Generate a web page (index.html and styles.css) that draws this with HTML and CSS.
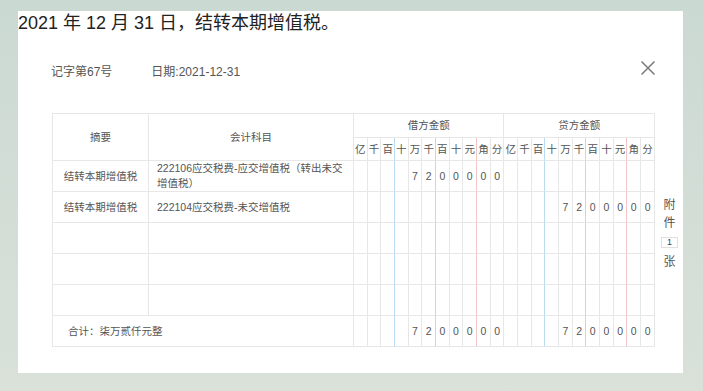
FILE: index.html
```html
<!DOCTYPE html>
<html lang="zh-CN">
<head>
<meta charset="utf-8">
<title>记账凭证</title>
<link rel="stylesheet" href="styles.css">
</head>
<body>
<div class="sheet">
  <div class="title">2021 年 12 月 31 日，结转本期增值税。</div>
  <div class="dialog">
    <div class="head">
      <div class="meta"><span class="no">记字第67号</span><span class="date">日期:2021-12-31</span></div>
      <span class="close"><svg width="16" height="16" viewBox="0 0 16 16"><path d="M1.5 1.5 L14.5 14.5 M14.5 1.5 L1.5 14.5" stroke="#7a7a7a" stroke-width="1.5" fill="none"/></svg></span>
    </div>
    <div class="body">
      <table class="voucher">
        <colgroup><col class="c-sum"><col class="c-acc"></colgroup>
        <thead>
          <tr class="h1">
            <th rowspan="2">摘要</th>
            <th rowspan="2">会计科目</th>
            <th colspan="11">借方金额</th>
            <th colspan="11">贷方金额</th>
          </tr>
          <tr class="h2">
            <th>亿</th><th>千</th><th class="bl">百</th><th>十</th><th>万</th><th class="bl">千</th><th>百</th><th>十</th><th class="rd">元</th><th>角</th><th>分</th>
            <th>亿</th><th>千</th><th class="bl">百</th><th>十</th><th>万</th><th class="bl">千</th><th>百</th><th>十</th><th class="rd">元</th><th>角</th><th>分</th>
          </tr>
        </thead>
        <tbody>
          <tr>
            <td class="sum">结转本期增值税</td>
            <td class="acc">222106应交税费-应交增值税（转出未交增值税）</td>
            <td></td><td></td><td class="bl"></td><td></td><td>7</td><td class="bl">2</td><td>0</td><td>0</td><td class="rd">0</td><td>0</td><td>0</td>
            <td></td><td></td><td class="bl"></td><td></td><td></td><td class="bl"></td><td></td><td></td><td class="rd"></td><td></td><td></td>
          </tr>
          <tr>
            <td class="sum">结转本期增值税</td>
            <td class="acc">222104应交税费-未交增值税</td>
            <td></td><td></td><td class="bl"></td><td></td><td></td><td class="bl"></td><td></td><td></td><td class="rd"></td><td></td><td></td>
            <td></td><td></td><td class="bl"></td><td></td><td>7</td><td class="bl">2</td><td>0</td><td>0</td><td class="rd">0</td><td>0</td><td>0</td>
          </tr>
          <tr>
            <td class="sum"></td><td class="acc"></td>
            <td></td><td></td><td class="bl"></td><td></td><td></td><td class="bl"></td><td></td><td></td><td class="rd"></td><td></td><td></td>
            <td></td><td></td><td class="bl"></td><td></td><td></td><td class="bl"></td><td></td><td></td><td class="rd"></td><td></td><td></td>
          </tr>
          <tr>
            <td class="sum"></td><td class="acc"></td>
            <td></td><td></td><td class="bl"></td><td></td><td></td><td class="bl"></td><td></td><td></td><td class="rd"></td><td></td><td></td>
            <td></td><td></td><td class="bl"></td><td></td><td></td><td class="bl"></td><td></td><td></td><td class="rd"></td><td></td><td></td>
          </tr>
          <tr>
            <td class="sum"></td><td class="acc"></td>
            <td></td><td></td><td class="bl"></td><td></td><td></td><td class="bl"></td><td></td><td></td><td class="rd"></td><td></td><td></td>
            <td></td><td></td><td class="bl"></td><td></td><td></td><td class="bl"></td><td></td><td></td><td class="rd"></td><td></td><td></td>
          </tr>
          <tr class="total">
            <td class="total-label" colspan="2">合计：柒万贰仟元整</td>
            <td></td><td></td><td class="bl"></td><td></td><td>7</td><td class="bl">2</td><td>0</td><td>0</td><td class="rd">0</td><td>0</td><td>0</td>
            <td></td><td></td><td class="bl"></td><td></td><td>7</td><td class="bl">2</td><td>0</td><td>0</td><td class="rd">0</td><td>0</td><td>0</td>
          </tr>
        </tbody>
      </table>
      <div class="attach">
        <span class="ch">附</span>
        <span class="ch">件</span>
        <span class="count">1</span>
        <span class="ch zhang">张</span>
      </div>
    </div>
  </div>
</div>
</body>
</html>
```

FILE: styles.css
```css
html, body {
  margin: 0;
  padding: 0;
}

body {
  width: 703px;
  height: 391px;
  background: linear-gradient(#cbd9d3, #d9e1d9);
  font-family: "Liberation Sans", "Noto Sans CJK SC", sans-serif;
  overflow: hidden;
}

.sheet {
  margin: 11px 0 0 18px;
  width: 665px;
  height: 362px;
  background: #fff;
  overflow: hidden;
}

.title {
  font-size: 18px;
  line-height: 24px;
  height: 24px;
  color: #222;
  white-space: nowrap;
}

.dialog {
  padding-left: 33px;
  width: 605px;
}

.head {
  margin-top: 20px;
  height: 30px;
  display: flex;
  align-items: center;
  justify-content: space-between;
}

.meta {
  font-size: 12px;
  color: #555;
  display: flex;
}

.date {
  margin-left: 39px;
}

.close {
  display: flex;
  width: 16px;
  height: 16px;
  margin-top: -4px;
}

.body {
  margin-top: 28px;
  display: flex;
  align-items: flex-start;
  width: 630px;
}

.voucher {
  flex: none;
  margin-left: 1px;
  width: 603px;
  table-layout: fixed;
  border-collapse: separate;
  border-spacing: 0;
  border-top: 1px solid #e7e7e7;
  border-left: 1px solid #e7e7e7;
  font-size: 10.5px;
  color: #555;
}

.c-sum { width: 96px; }
.c-acc { width: 205px; }

.voucher th,
.voucher td {
  border-right: 1px solid #e7e7e7;
  border-bottom: 1px solid #e7e7e7;
  padding: 0;
  font-weight: normal;
  text-align: center;
  vertical-align: middle;
  line-height: 15px;
}

.voucher .bl { border-right-color: #b9dcf3; }
.voucher .rd { border-right-color: #f5c4c4; }

.h1 th { height: 23px; }
.h2 th { height: 22px; }

.voucher tbody td { height: 30px; }

.voucher td.acc {
  text-align: left;
  padding: 0 8px;
}

.voucher td.total-label {
  text-align: left;
  padding-left: 15px;
}

.attach {
  flex: none;
  margin-left: 6px;
  margin-top: 83px;
  width: 17px;
  display: flex;
  flex-direction: column;
  align-items: center;
  font-size: 12px;
  color: #555;
}

.ch {
  line-height: 18px;
}

.count {
  margin-top: 5px;
  width: 15px;
  height: 9px;
  border: 1px solid #e0e0e0;
  font-size: 9px;
  line-height: 9px;
  text-align: center;
  color: #444;
}

.zhang {
  margin-top: 5px;
}
```
